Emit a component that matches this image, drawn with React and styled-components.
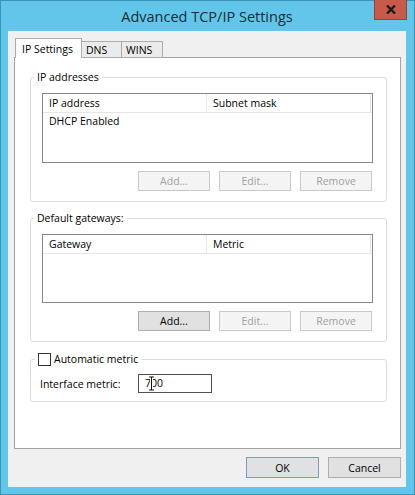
import React from "react";
import styled, { createGlobalStyle } from "styled-components";

const GlobalStyle = createGlobalStyle`
  html, body {
    margin: 0;
    padding: 0;
    background: #ffffff;
  }
  * {
    box-sizing: border-box;
  }
`;

const FONT = `"Open Sans", "Noto Sans", "Liberation Sans", sans-serif`;

const Window = styled.div`
  width: 415px;
  height: 495px;
  border: 1px solid #3d93b6;
  background: #62c6ea;
  padding: 0 8px 7px 7px;
  display: flex;
  flex-direction: column;
  font-family: ${FONT};
  font-size: 10.5px;
  color: #000;
`;

const TitleBar = styled.div`
  height: 30px;
  display: grid;
  grid-template-columns: 1fr auto 1fr;
  align-items: center;
`;

const Title = styled.div`
  grid-column: 2;
  font-size: 14.5px;
  color: #1b2c36;
  padding-top: 1px;
`;

const CloseButton = styled.div`
  grid-column: 3;
  justify-self: end;
  align-self: start;
  width: 33px;
  height: 20px;
  margin-top: -1px;
  margin-right: -1px;
  background: #c85a4c;
  border: 1px solid #9c3f34;
  border-top: none;
  display: flex;
  align-items: center;
  justify-content: center;
`;

const Client = styled.div`
  flex: 1;
  background: #f0f0f0;
  padding: 7px 5px 9px 6px;
  display: flex;
  flex-direction: column;
`;

const TabStrip = styled.div`
  display: flex;
  align-items: flex-end;
  height: 20px;
  margin-left: 1px;
  margin-bottom: -1px;
  position: relative;
  z-index: 1;
`;

const Tab = styled.div`
  height: ${(p) => (p.$active ? "20px" : "17px")};
  padding: ${(p) => (p.$active ? "3px 6px 0 6px" : "1px 4px 0 4px")};
  min-width: ${(p) => p.$width}px;
  border: 1px solid #adadad;
  border-bottom: ${(p) => (p.$active ? "none" : "1px solid #adadad")};
  margin-left: ${(p) => (p.$first ? "0" : "-1px")};
  background: ${(p) => (p.$active ? "#ffffff" : "#ebebeb")};
  line-height: 14px;
`;

const Panel = styled.div`
  flex: 1;
  background: #ffffff;
  border: 1px solid #a3a3a3;
  padding: 11px 13px 0 15px;
  display: flex;
  flex-direction: column;
`;

const Group = styled.fieldset`
  margin: ${(p) => p.$top || 0}px 0 0 0;
  padding: 0 13px ${(p) => p.$bottom || 10}px ${(p) => p.$left || 11}px;
  border: 1px solid #dcdcdc;
  border-radius: 3px;
  min-width: 0;
`;

const Legend = styled.legend`
  margin-left: ${(p) => p.$offset}px;
  padding: 0 3px;
  line-height: 16px;
  display: flex;
  align-items: center;
  gap: 3px;
`;

const ListView = styled.div`
  margin-top: 8px;
  height: ${(p) => p.$height}px;
  border: 1px solid #828790;
  background: #ffffff;
`;

const HeaderRow = styled.div`
  display: grid;
  grid-template-columns: 164px 164px;
  height: 19px;
  border-bottom: 1px solid #e5e5e5;
`;

const HeaderCell = styled.div`
  padding-left: 6px;
  line-height: 18px;
  border-right: 1px solid #e5e5e5;
`;

const Row = styled.div`
  padding-left: 6px;
  line-height: 17px;
`;

const ButtonRow = styled.div`
  display: flex;
  justify-content: flex-end;
  gap: 9px;
  margin-top: 8px;
  margin-right: 1px;
`;

const Button = styled.div`
  width: ${(p) => p.$w || 72}px;
  height: ${(p) => p.$h || 20}px;
  border: 1px solid
    ${(p) => (p.$disabled ? "#c9c9c9" : p.$default ? "#7a9cc0" : "#adadad")};
  background: ${(p) => (p.$disabled ? "#f4f4f4" : "#e1e1e1")};
  color: ${(p) => (p.$disabled ? "#a0a0a0" : "#000")};
  display: flex;
  align-items: center;
  justify-content: center;
`;

const Checkbox = styled.div`
  width: 13px;
  height: 13px;
  border: 1px solid #333;
  background: #fff;
`;

const MetricRow = styled.div`
  display: flex;
  align-items: center;
  margin-top: 7px;
`;

const MetricLabel = styled.div`
  width: 98px;
`;

const TextBox = styled.div`
  position: relative;
  width: 74px;
  height: 19px;
  border: 1px solid #505050;
  background: #fff;
  padding-left: 6px;
  line-height: 17px;
`;

const Cursor = styled.svg`
  position: absolute;
  left: 9px;
  top: 1px;
`;

const Footer = styled.div`
  display: flex;
  justify-content: flex-end;
  gap: 9px;
  margin-top: 8px;
`;

function AddressList({ height, columns, rows }) {
  return (
    <ListView $height={height}>
      <HeaderRow>
        {columns.map((c) => (
          <HeaderCell key={c}>{c}</HeaderCell>
        ))}
      </HeaderRow>
      {rows.map((r) => (
        <Row key={r}>{r}</Row>
      ))}
    </ListView>
  );
}

function Actions({ addEnabled }) {
  return (
    <ButtonRow>
      <Button $disabled={!addEnabled}>Add...</Button>
      <Button $disabled>Edit...</Button>
      <Button $disabled>Remove</Button>
    </ButtonRow>
  );
}

export default function App() {
  return (
    <>
      <GlobalStyle />
      <Window>
        <TitleBar>
          <Title>Advanced TCP/IP Settings</Title>
          <CloseButton>
            <svg width="10" height="9" viewBox="0 0 10 9">
              <path d="M1 0.5 L9 8.5 M9 0.5 L1 8.5" stroke="#1a1a1a" strokeWidth="2.4" />
            </svg>
          </CloseButton>
        </TitleBar>
        <Client>
          <TabStrip>
            <Tab $active $first $width={67}>IP Settings</Tab>
            <Tab $width={41}>DNS</Tab>
            <Tab $width={42}>WINS</Tab>
          </TabStrip>
          <Panel>
            <Group>
              <Legend $offset={-8}>IP addresses</Legend>
              <AddressList
                height={70}
                columns={["IP address", "Subnet mask"]}
                rows={["DHCP Enabled"]}
              />
              <Actions addEnabled={false} />
            </Group>
            <Group $top={8}>
              <Legend $offset={-8}>Default gateways:</Legend>
              <AddressList height={69} columns={["Gateway", "Metric"]} rows={[]} />
              <Actions addEnabled />
            </Group>
            <Group $top={9} $left={9} $bottom={8}>
              <Legend $offset={-5}>
                <Checkbox />
                Automatic metric
              </Legend>
              <MetricRow>
                <MetricLabel>Interface metric:</MetricLabel>
                <TextBox>
                  700
                  <Cursor width="7" height="15" viewBox="0 0 7 15">
                    <path
                      d="M1 1 H6 M3.5 1 V14 M1 14 H6"
                      stroke="#fff"
                      strokeWidth="3"
                      fill="none"
                    />
                    <path
                      d="M1 1 H6 M3.5 1 V14 M1 14 H6"
                      stroke="#111"
                      strokeWidth="1"
                      fill="none"
                    />
                  </Cursor>
                </TextBox>
              </MetricRow>
            </Group>
          </Panel>
          <Footer>
            <Button $w={73} $h={21} $default>
              OK
            </Button>
            <Button $w={73} $h={21}>
              Cancel
            </Button>
          </Footer>
        </Client>
      </Window>
    </>
  );
}
